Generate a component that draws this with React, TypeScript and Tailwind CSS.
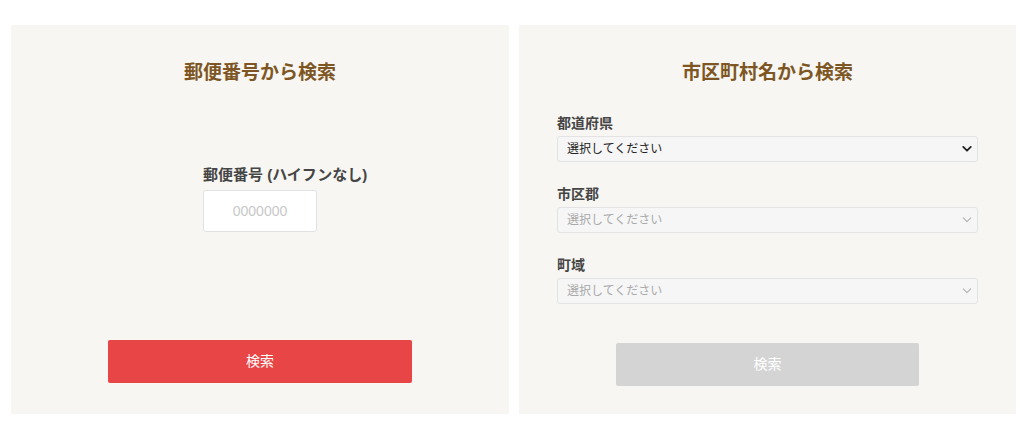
const font = "font-['Liberation_Sans','Noto_Sans_CJK_JP',sans-serif]";

function Chevron({ disabled }: { disabled?: boolean }) {
    return (
        <svg
            viewBox="0 0 12 8"
            className="pointer-events-none absolute right-[6px] top-1/2 h-[7px] w-[10px] -translate-y-1/2"
            fill="none"
            stroke={disabled ? '#b5b5b5' : '#222'}
            strokeWidth={disabled ? 1.4 : 2.2}
            strokeLinecap="round"
            strokeLinejoin="round"
        >
            <path d="M1.5 1.5 6 6l4.5-4.5" />
        </svg>
    );
}

function SelectField({
    label,
    disabled,
    className = '',
}: {
    label: string;
    disabled?: boolean;
    className?: string;
}) {
    return (
        <div className={className}>
            <div className="mb-[3px] text-[14px] leading-[20px] font-bold text-[#454545]">
                {label}
            </div>
            <div className="relative">
                <select
                    disabled={disabled}
                    className={`${font} block h-[26px] w-full appearance-none rounded-[3px] border border-[#e3e3e3] bg-[#f6f6f6] pl-[9px] text-[12px] outline-none ${
                        disabled ? 'text-[#a9a9a9]' : 'text-[#222]'
                    }`}
                >
                    <option>選択してください</option>
                </select>
                <Chevron disabled={disabled} />
            </div>
        </div>
    );
}

export default function App() {
    return (
        <div className={`${font} flex min-h-[422px] gap-[10px] bg-white pt-[25px] pl-[11px]`}>
            {/* 郵便番号 */}
            <section className="flex h-[389px] w-[498px] flex-col items-center bg-[#f7f6f2] pt-[34px]">
                <h2 className="text-[19px] leading-[28px] font-bold text-[#7d5624]">
                    郵便番号から検索
                </h2>
                <div className="mt-[78px] w-[114px]">
                    <div className="text-[15px] leading-[20px] font-bold whitespace-nowrap text-[#454545]">
                        郵便番号 (ハイフンなし)
                    </div>
                    <input
                        placeholder="0000000"
                        className={`${font} mt-[5px] block h-[42px] w-[114px] rounded-[3px] border border-[#e2e2e2] bg-white text-center text-[14px] outline-none placeholder:text-[#c8c8c8]`}
                    />
                </div>
                <button className="mt-[108px] h-[43px] w-[304px] rounded-[2px] bg-[#e84646] text-[14px] text-white">
                    検索
                </button>
            </section>

            {/* 市区町村 */}
            <section className="flex h-[389px] w-[497px] flex-col bg-[#f7f6f2] px-[38px] pt-[34px]">
                <h2 className="text-center text-[19px] leading-[28px] font-bold text-[#7d5624]">
                    市区町村名から検索
                </h2>
                <SelectField label="都道府県" className="mt-[26px]" />
                <SelectField label="市区郡" disabled className="mt-[22px]" />
                <SelectField label="町域" disabled className="mt-[22px]" />
                <button
                    disabled
                    className="mt-[39px] h-[43px] w-[303px] self-center rounded-[2px] bg-[#d4d4d4] text-[14px] text-white"
                >
                    検索
                </button>
            </section>
        </div>
    );
}
